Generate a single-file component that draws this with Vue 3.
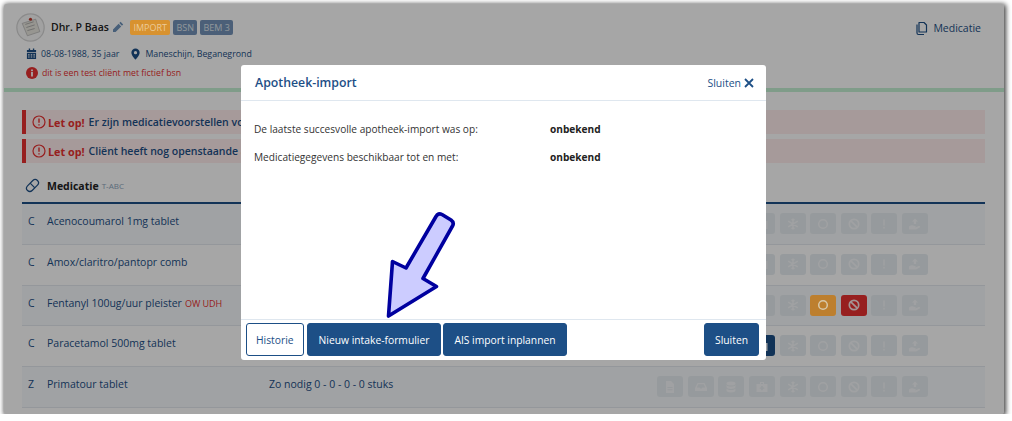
<template>
  <div class="window">
    <header class="client-bar">
      <div class="client-info">
        <div class="name-row">
          <svg class="avatar" viewBox="0 0 28 28">
            <circle cx="14" cy="14" r="13.2" fill="#f7f7f7" stroke="#d5d5d5" stroke-width="1.2" />
            <path d="M6 10l13-4 4 12-12 4z" fill="#e8e6df" stroke="#aaa" stroke-width=".6" />
            <path d="M9 11l8-2.500M10 14l8-2.500M11 17l7-2" stroke="#999" stroke-width=".7" />
            <circle cx="14" cy="6" r="1.500" fill="#c0392b" />
          </svg>
          <span class="client-name">Dhr. P Baas</span>
          <svg class="pencil" viewBox="0 0 12 12"><path d="M8.600.8l2.600 2.600-1.300 1.300-2.600-2.600zM6.600 2.800l2.600 2.600-5.600 5.600H1v-2.600z" /></svg>
          <span class="tag tag-orange">IMPORT</span>
          <span class="tag">BSN</span>
          <span class="tag">BEM 3</span>
        </div>
        <div class="meta-row">
          <svg class="meta-icon" viewBox="0 0 12 12"><path d="M3 0h1.500v1.500h3V0H9v1.500h2V4H1V1.500h2zM1 5h10v6.500H1zM2.300 6.300v1.200h1.600V6.300zm2.900 0v1.200h1.600V6.300zm2.900 0v1.200h1.600V6.300zM2.300 8.600v1.200h1.600V8.600zm2.900 0v1.200h1.600V8.600zm2.900 0v1.200h1.600V8.600z" fill-rule="evenodd" /></svg>
          <span>08-08-1988, 35 jaar</span>
          <svg class="meta-icon pin" viewBox="0 0 12 12"><path d="M6 0a4.500 4.500 0 0 0-4.500 4.500C1.500 7.500 6 12 6 12s4.500-4.500 4.500-7.500A4.500 4.500 0 0 0 6 0zm0 6.300a1.800 1.800 0 1 1 0-3.600 1.800 1.800 0 0 1 0 3.600z" fill-rule="evenodd" /></svg>
          <span>Maneschijn, Beganegrond</span>
        </div>
        <div class="warning-row">
          <svg class="warn-icon" viewBox="0 0 12 12"><circle cx="6" cy="6" r="6" fill="#e83030" /><rect x="5.100" y="5" width="1.800" height="4.500" fill="#fff" /><rect x="5.100" y="2.500" width="1.800" height="1.700" fill="#fff" /></svg>
          <span>dit is een test cliënt met fictief bsn</span>
        </div>
      </div>
      <div class="nav-link">
        <svg viewBox="0 0 14 14" class="copy-icon"><path d="M4 1h5l2.500 2.500V10.500H4zM2 3v8.500a1.500 1.500 0 0 0 1.500 1.500H9" fill="none" stroke="currentColor" stroke-width="1.200" stroke-linejoin="round" /></svg>
        <span>Medicatie</span>
      </div>
    </header>

    <main class="content">
      <div v-for="alert in alerts" :key="alert" class="alert">
        <svg viewBox="0 0 14 14" class="alert-icon"><circle cx="7" cy="7" r="6" fill="none" stroke="#e83030" stroke-width="1.200" /><path d="M7 3.500v4.300M7 9.300v1.300" stroke="#e83030" stroke-width="1.400" /></svg>
        <strong>Let op!</strong>
        <span>{{ alert }}</span>
      </div>

      <div class="list-head">
        <svg viewBox="0 0 16 16" class="pill"><g transform="rotate(-45 8 8)" fill="none" stroke="#1d4f86" stroke-width="1.300"><rect x="0.500" y="4.500" width="15" height="7" rx="3.500" /><path d="M8 4.500v7" /></g></svg>
        <span class="list-title">Medicatie</span>
        <span class="list-sub">T-ABC</span>
      </div>

      <div v-for="(row, i) in rows" :key="row.name" class="med-row" :class="{ striped: i % 2 === 0 }">
        <span class="med-code">{{ row.code }}</span>
        <span class="med-name">{{ row.name }}<em v-if="row.flag">{{ row.flag }}</em></span>
        <span class="med-dose">{{ row.dose }}</span>
        <div class="actions">
          <span
            v-for="(icon, n) in icons"
            :key="icon"
            class="act"
            :class="row.states[n]"
          >
            <svg viewBox="0 0 12 12"><use :href="'#' + icon" /></svg>
          </span>
        </div>
      </div>

      <svg class="sprite" width="0" height="0">
        <symbol id="i-file" viewBox="0 0 12 12"><path d="M2 0h5l3 3v9H2zM3.500 6v1h5V6zm0 2.200v1h5v-1z" fill="currentColor" fill-rule="evenodd" /></symbol>
        <symbol id="i-inbox" viewBox="0 0 12 12"><path d="M2.500 2h7L12 7v3H0V7zm.8 1.300L1.800 6.500h2.700l.8 1h1.400l.8-1h2.700L8.700 3.300z" fill="currentColor" fill-rule="evenodd" /></symbol>
        <symbol id="i-db" viewBox="0 0 12 12"><ellipse cx="6" cy="2.500" rx="4.500" ry="2" fill="currentColor" /><path d="M1.500 4v2c0 1 2 2 4.500 2s4.500-1 4.500-2V4c-1 1-2.500 1.500-4.500 1.500S2.500 5 1.500 4zm0 3.500v2c0 1 2 2 4.500 2s4.500-1 4.500-2v-2C9.500 8.500 8 9 6 9s-3.500-.5-4.500-1.500z" fill="currentColor" /></symbol>
        <symbol id="i-kit" viewBox="0 0 12 12"><path d="M4 1h4v2h3.500v8H.500V3H4zm1 1v1h2V2zM5.200 5v1.500H3.700v1.300h1.500v1.500h1.600V7.800h1.500V6.500H6.800V5z" fill="currentColor" fill-rule="evenodd" /></symbol>
        <symbol id="i-snow" viewBox="0 0 12 12"><path d="M6 .5v11M1.200 3.200l9.600 5.600M10.800 3.200l-9.600 5.600M4.600 1.300L6 2.600l1.400-1.300M4.600 10.700L6 9.400l1.400 1.300" fill="none" stroke="currentColor" stroke-width="1.500" /></symbol>
        <symbol id="i-circle" viewBox="0 0 12 12"><circle cx="6" cy="6" r="4.300" fill="none" stroke="currentColor" stroke-width="1.500" /></symbol>
        <symbol id="i-ban" viewBox="0 0 12 12"><circle cx="6" cy="6" r="4.700" fill="none" stroke="currentColor" stroke-width="1.700" /><path d="M2.800 2.800l6.400 6.400" stroke="currentColor" stroke-width="1.700" /></symbol>
        <symbol id="i-excl" viewBox="0 0 12 12"><path d="M6 1.500v6M6 8.800v1.700" stroke="currentColor" stroke-width="1.500" /></symbol>
        <symbol id="i-hand" viewBox="0 0 12 12"><path d="M6 .5L9 3.500H7.200V6H4.800V3.500H3zM0 8.500c1.500-1.200 3-1.500 4-1l2 .5c1 .2 1 1.300 0 1.300H4.500h2.200l3-1.200c1.200-.4 1.900.7 1 1.300L7 11.500H0z" fill="currentColor" /></symbol>
      </svg>
    </main>

    <div class="backdrop"></div>

    <section class="modal">
      <div class="modal-head">
        <h2>Apotheek-import</h2>
        <span class="modal-close">
          Sluiten
          <svg viewBox="0 0 10 10"><path d="M1 1l8 8M9 1l-8 8" stroke="currentColor" stroke-width="1.800" /></svg>
        </span>
      </div>
      <div class="modal-body">
        <div v-for="line in infoLines" :key="line" class="info-line">
          <span class="info-label">{{ line }}</span>
          <strong>onbekend</strong>
        </div>
      </div>
      <div class="modal-foot">
        <button class="btn btn-outline">Historie</button>
        <button class="btn btn-wide">Nieuw intake-formulier</button>
        <button class="btn">AIS import inplannen</button>
        <button class="btn btn-end">Sluiten</button>
      </div>
    </section>

    <svg class="arrow" viewBox="0 0 80 120" width="80" height="120">
      <path d="M20 59L50 7.500Q52 3.500 56 5.500L65 11Q68.500 13.500 66.500 17L37 69.500 50.500 77.500 2.500 107 6.500 52.500z" fill="#ccccff" stroke="#00009f" stroke-width="3.600" stroke-linejoin="round" />
    </svg>
  </div>
</template>

<script setup>
// alerts run on under the dialog, only the visible part is kept
const alerts = [
  'Er zijn medicatievoorstellen vo',
  'Cliënt heeft nog openstaande a'
]

const infoLines = [
  'De laatste succesvolle apotheek-import was op:',
  'Medicatiegegevens beschikbaar tot en met:'
]

const icons = ['i-file', 'i-inbox', 'i-db', 'i-kit', 'i-snow', 'i-circle', 'i-ban', 'i-excl', 'i-hand']

const rows = [
  { code: 'C', name: 'Acenocoumarol 1mg tablet', dose: '', states: {} },
  { code: 'C', name: 'Amox/claritro/pantopr comb', dose: '', states: {} },
  { code: 'C', name: 'Fentanyl 100ug/uur pleister', flag: 'OW UDH', dose: '', states: { 5: 'orange', 6: 'red' } },
  { code: 'C', name: 'Paracetamol 500mg tablet', dose: '', states: { 3: 'blue' } },
  { code: 'Z', name: 'Primatour tablet', dose: 'Zo nodig 0 - 0 - 0 - 0 stuks', states: {} }
]
</script>

<style>
html, body {
  background: #fff;
}
</style>

<style scoped>
.window {
  position: relative;
  width: 1000px;
  height: 410px;
  margin: 4px 0 0 4px;
  background: #fff;
  font-family: "Open Sans", "Liberation Sans", sans-serif;
  font-size: 10.5px;
  color: #1d4f86;
  box-shadow: 1px 1px 5px 1px rgba(0, 0, 0, 0.75);
  border-radius: 2px;
}

.client-bar {
  display: flex;
  justify-content: space-between;
  height: 84px;
  box-sizing: border-box;
  padding: 8px 23px 0 12px;
}

.name-row {
  display: flex;
  align-items: center;
  height: 30px;
}

.avatar {
  width: 29px;
  height: 29px;
  margin-right: 6px;
}

.client-name {
  font-size: 10.500px;
  font-weight: 600;
  color: #222;
}

.pencil {
  width: 12px;
  height: 12px;
  margin: 0 6px 0 3px;
  fill: #6f93bb;
}

.tag {
  height: 15px;
  line-height: 15px;
  padding: 0 3.500px;
  margin-right: 2.500px;
  border-radius: 2px;
  background: #7493b8;
  color: #dfe6ee;
  font-size: 9px;
}

.tag-orange {
  position: relative;
  z-index: 1;
  background: #d8922f;
  color: #eccb98;
}

.meta-row {
  display: flex;
  align-items: center;
  height: 14px;
  margin: 5px 0 0 10px;
  font-size: 8.800px;
}

.meta-icon {
  width: 11px;
  height: 12px;
  margin-right: 4px;
  fill: #1d4f86;
}

.pin {
  margin-left: 11px;
}

.warning-row {
  display: flex;
  align-items: center;
  height: 14px;
  margin: 5px 0 0 10px;
  color: #e83030;
  font-size: 8.750px;
}

.warn-icon {
  width: 12px;
  height: 12px;
  margin-right: 4px;
}

.nav-link {
  display: flex;
  align-items: center;
  gap: 4px;
  height: 16px;
  margin-top: 8px;
  font-size: 10.500px;
}

.copy-icon {
  width: 14px;
  height: 15px;
}

.content {
  border-top: 4px solid #c3f0d3;
  padding: 18px 19px 0 18px;
}

.alert {
  display: flex;
  align-items: center;
  height: 24px;
  margin-bottom: 5px;
  padding-left: 6px;
  background: #ffeded;
  border-left: 4px solid #e83030;
  font-size: 10.500px;
  font-weight: 600;
  white-space: nowrap;
}

.alert strong {
  margin-right: 4px;
  font-size: 10.800px;
  color: #e83030;
  font-weight: 700;
}

.alert-icon {
  width: 14px;
  height: 14px;
  margin-right: 2px;
}

.list-head {
  display: flex;
  align-items: center;
  height: 36px;
  border-bottom: 2px solid #1d4f86;
  box-sizing: border-box;
  padding: 1px 0 0 3px;
}

.pill {
  width: 15px;
  height: 15px;
  margin-right: 7px;
}

.list-title {
  font-size: 10.500px;
  font-weight: 700;
  color: #222;
}

.list-sub {
  margin-left: 3px;
  font-size: 8px;
  color: #8da4bd;
}

.med-row {
  display: grid;
  grid-template-columns: 19px 222px 1fr auto;
  align-items: start;
  height: 40.800px;
  box-sizing: border-box;
  padding: 9px 57px 0 6px;
  border-bottom: 1px solid #e3e9ef;
}

.striped {
  background: #f6f9fc;
}

.med-code,
.med-name,
.med-dose {
  line-height: 16px;
}

.med-name em {
  margin-left: 3px;
  font-style: normal;
  font-size: 9px;
  color: #e83030;
}

.actions {
  display: flex;
  gap: 4.600px;
}

.act {
  display: flex;
  align-items: center;
  justify-content: center;
  width: 26px;
  height: 21px;
  border-radius: 3px;
  background: #e7edf1;
  color: #f6f8fa;
}

.act svg {
  width: 12px;
  height: 12px;
}

.orange {
  position: relative;
  z-index: 1;
  background: #bd7f2e;
  color: #d8c8a8;
}

.red {
  background: #e83030;
  color: #fbe4e4;
}

.blue {
  background: #1d4f86;
}

.sprite {
  position: absolute;
}

.backdrop {
  position: absolute;
  inset: 0;
  background: rgba(0, 0, 0, 0.35);
  border-radius: 2px;
}

.modal {
  position: absolute;
  z-index: 2;
  left: 237px;
  top: 61px;
  width: 525px;
  height: 295px;
  display: flex;
  flex-direction: column;
  background: #fff;
  border-radius: 3px;
}

.modal-head {
  display: flex;
  align-items: center;
  justify-content: space-between;
  height: 35px;
  padding: 0 12px 0 14px;
  border-bottom: 1px solid #dfe7ef;
  flex-shrink: 0;
}

.modal-head h2 {
  margin: 0;
  font-size: 12.300px;
  font-weight: 600;
}

.modal-close {
  display: flex;
  align-items: center;
  gap: 3px;
  font-size: 10.500px;
}

.modal-close svg {
  width: 10px;
  height: 10px;
}

.modal-body {
  flex: 1;
  padding: 14px 13px 0;
  font-size: 10.150px;
  color: #333;
}

.info-line {
  display: grid;
  grid-template-columns: 296px 1fr;
  height: 28px;
  line-height: 28px;
}

.info-line strong {
  font-weight: 700;
  color: #222;
}

.modal-foot {
  display: flex;
  gap: 2px;
  height: 41px;
  box-sizing: border-box;
  padding: 3px 7px 0 5px;
  border-top: 1px solid #dfe7ef;
  flex-shrink: 0;
}

.btn {
  height: 33px;
  padding: 0 10px;
  border: 1px solid #1d4f86;
  border-radius: 3px;
  background: #1d4f86;
  color: #fff;
  font-family: inherit;
  font-size: 10.300px;
  font-weight: 500;
}

.btn-outline {
  margin-right: 1px;
  padding: 0 9px;
  background: #fff;
  color: #1d4f86;
}

.btn-wide {
  padding: 0 11px;
}

.btn-end {
  margin-left: auto;
}

.arrow {
  position: absolute;
  z-index: 3;
  left: 382px;
  top: 205px;
}
</style>
